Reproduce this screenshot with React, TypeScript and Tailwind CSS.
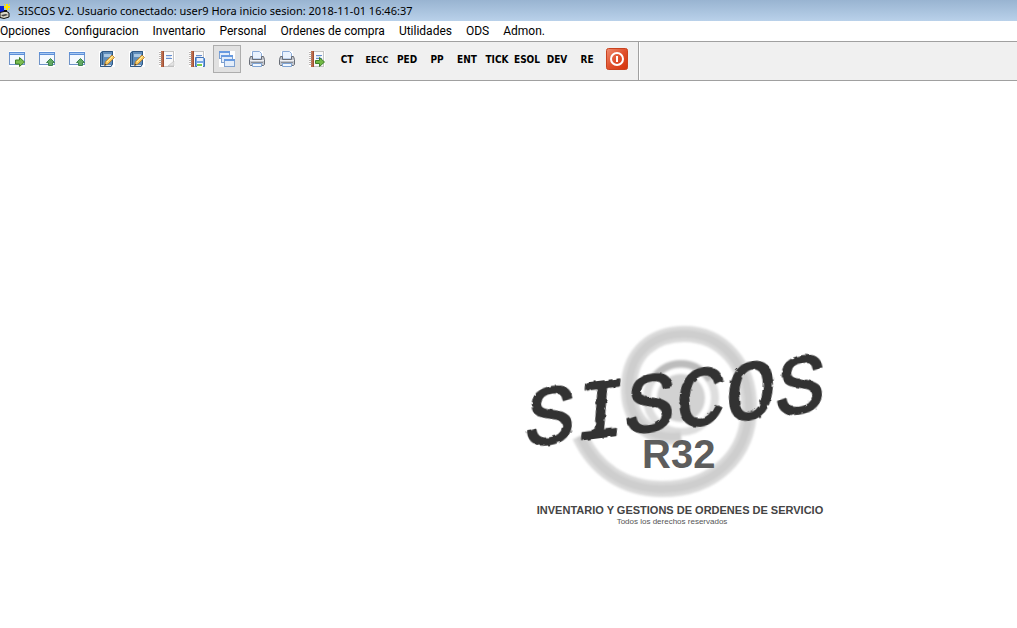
import React from "react";

function AppIcon() {
  return (
    <svg className="h-4 w-3 shrink-0" viewBox="0 0 12 16" aria-hidden="true">
      <path d="M0 3h4v6H0z" fill="#0a22d8" />
      <path d="M6 1h2v2h2v2H8v2H6V5H4V3h2z" fill="#ffe600" />
      <path d="M4 1h1v1H4zM9 1h1v1H9zM9 6h1v1H9z" fill="#ffe600" />
      <path d="M0 9.500l6-1.500 3 2v4l-5 1.500-4-1z" fill="#d9d6c8" stroke="#111" />
      <path d="M1 12l5-1 2 1-5 1.500z" fill="#444" />
      <path d="M4 7h3v2H4z" fill="#111" />
    </svg>
  );
}

function WindowFrame() {
  return (
    <>
      <rect x="0" y="0" width="16" height="16" fill="#fff" />
      <rect x=".5" y="1.5" width="15" height="12" fill="#f4f9ff" stroke="#6f93c8" />
      <rect x="0" y="1" width="16" height="3" fill="#5c8fd8" />
      <rect x="1" y="2" width="14" height="1" fill="#a9c9f2" />
    </>
  );
}

function WindowNext() {
  return (
    <svg className="size-4" viewBox="0 0 16 16" aria-hidden="true">
      <WindowFrame />
      <path d="M6.500 9h4V6.500l5 4.500-5 4.500V13h-4z" fill="#7cbd50" stroke="#3d7f26" />
    </svg>
  );
}

function WindowUp() {
  return (
    <svg className="size-4" viewBox="0 0 16 16" aria-hidden="true">
      <WindowFrame />
      <path d="M11.500 7.500l4 4h-2v3h-4v-3h-2z" fill="#63ab62" stroke="#3d8250" />
    </svg>
  );
}

function BookEdit() {
  return (
    <svg className="size-4" viewBox="0 0 16 16" aria-hidden="true">
      <rect width="16" height="16" fill="#fff" />
      <path d="M1 2l2-2h11v13l-2 3H1z" fill="#5f8dbb" />
      <path d="M1.500 2.500l2-2h10v12.500l-1.500 2.500H1.500z" fill="none" stroke="#2d5683" />
      <path d="M3.500 1v13" stroke="#315b88" />
      <path d="M5 3h7v3H5z" fill="#a9c7e3" />
      <path d="M2 14.500h10" stroke="#dce8f4" />
      <path d="M5.500 14.500l1-4L13 4l2.500 2.500-6.500 6.500z" fill="#f9c85c" stroke="#a87529" strokeWidth=".8" />
      <path d="M8 11l6-6" stroke="#fff0a8" />
      <path d="M5.500 14.500l.5-2 1.500 1.500z" fill="#333" />
    </svg>
  );
}

function NotebookBase() {
  return (
    <>
      <rect x="0" y="0" width="16" height="16" fill="#fff" />
      <rect x="3.500" y=".5" width="11" height="15" fill="#fafafa" stroke="#c4c4c4" />
      <rect x="2" y="0" width="3" height="16" fill="#bd6a48" />
      <path d="M0 1.500h3M0 3.500h3M0 5.500h3M0 7.500h3M0 9.500h3M0 11.500h3M0 13.500h3" stroke="#9b9490" strokeWidth=".7" />
      <path d="M4.500 0v16" stroke="#9d4d34" />
      <path d="M7 4.500h6M7 7.500h6" stroke="#668fd0" />
      <path d="M7 6h5" stroke="#b5caea" />
    </>
  );
}

function Notebook() {
  return (
    <svg className="size-4" viewBox="0 0 16 16" aria-hidden="true">
      <NotebookBase />
      <path d="M9 15l6-5v5z" fill="#e4e4e4" stroke="#bbb" strokeWidth=".6" />
    </svg>
  );
}

function NotebookSave() {
  return (
    <svg className="size-4" viewBox="0 0 16 16" aria-hidden="true">
      <NotebookBase />
      <path d="M6.500 6.500h8l1 1v8h-9z" fill="#78a8e6" stroke="#3f72b8" />
      <rect x="8" y="7" width="6" height="3" fill="#e8f1fc" />
      <rect x="8" y="12" width="6" height="4" fill="#fff" />
      <rect x="8" y="13" width="5" height="2" fill="#79cd4b" />
    </svg>
  );
}

function NotebookNext() {
  return (
    <svg className="size-4" viewBox="0 0 16 16" aria-hidden="true">
      <NotebookBase />
      <path d="M6.500 9.500h4v-3l5 4.500-5 4.500v-3h-4z" fill="#72b944" stroke="#3d7f26" />
    </svg>
  );
}

function Cascade() {
  return (
    <svg className="size-4" viewBox="0 0 16 16" aria-hidden="true">
      <rect width="16" height="16" fill="#fff" />
      <g fill="#e3edfa" stroke="#7da0d0">
        <rect x=".5" y=".5" width="10" height="7" />
        <rect x="2.500" y="4.500" width="11" height="7" />
        <rect x="5.500" y="8.500" width="10" height="7" />
      </g>
      <path d="M0 1h11M2 5h12M5 9h11" stroke="#679ae0" strokeWidth="2" />
    </svg>
  );
}

function Printer() {
  return (
    <svg className="size-4" viewBox="0 0 16 16" aria-hidden="true">
      <rect x="2" y="0" width="12" height="16" fill="#fff" />
      <path d="M3.500 8V.5h7l2 2V8z" fill="#eaf3ff" stroke="#8babd8" />
      <path d="M1.500 5.500h2v3h9v-3h2l1 3v5l-1 1h-13l-1-1v-5z" fill="#c3c7ce" stroke="#686d76" />
      <path d="M1 9.500h14" stroke="#f1f2f5" />
      <path d="M2 11.500h12" stroke="#8a8f98" />
      <path d="M3.500 12.500h9v3h-9z" fill="#f0f7ff" stroke="#7fa4d4" />
    </svg>
  );
}

function Power() {
  return (
    <svg className="size-[22px]" viewBox="0 0 22 22" aria-hidden="true">
      <defs>
        <linearGradient id="power-fill" x1="0" y1="0" x2="1" y2="1">
          <stop offset="0" stopColor="#ef8d71" />
          <stop offset=".5" stopColor="#e0512d" />
          <stop offset="1" stopColor="#d63208" />
        </linearGradient>
      </defs>
      <rect x=".5" y=".5" width="21" height="21" rx="2" fill="url(#power-fill)" stroke="#c9431f" />
      <circle cx="11" cy="11" r="6" fill="none" stroke="#fff" strokeWidth="2" />
      <path d="M11 8v6" stroke="#fff" strokeWidth="2" />
    </svg>
  );
}

type Tool = { label: string; icon?: () => React.JSX.Element; small?: boolean; active?: boolean };

const tools: Tool[] = [
  { label: "Abrir", icon: WindowNext },
  { label: "Subir", icon: WindowUp },
  { label: "Subir todo", icon: WindowUp },
  { label: "Editar", icon: BookEdit },
  { label: "Editar registro", icon: BookEdit },
  { label: "Libreta", icon: Notebook },
  { label: "Guardar", icon: NotebookSave },
  { label: "Cascada", icon: Cascade, active: true },
  { label: "Imprimir", icon: Printer },
  { label: "Imprimir reporte", icon: Printer },
  { label: "Exportar", icon: NotebookNext },
  { label: "CT" },
  { label: "EECC", small: true },
  { label: "PED" },
  { label: "PP" },
  { label: "ENT" },
  { label: "TICK" },
  { label: "ESOL" },
  { label: "DEV" },
  { label: "RE" },
  { label: "Salir", icon: Power },
];

const menus = ["Opciones", "Configuracion", "Inventario", "Personal", "Ordenes de compra", "Utilidades", "ODS", "Admon."];

function ToolButton({ label, icon: Icon, small, active }: Tool) {
  return (
    <button
      type="button"
      aria-label={label}
      aria-pressed={active}
      className={`flex size-7 shrink-0 items-center justify-center leading-4 font-bold whitespace-nowrap ${
        small ? "text-[9px]" : "text-[10px]"
      } ${Icon ? "" : "pt-0.5"} ${active ? "border border-[#adadad] bg-[#e1e1e1]" : ""}`}
    >
      {Icon ? <Icon /> : label}
    </button>
  );
}

const spiral =
  "M161 121C125 126 108 101 109 71C110 38 133 19 164 19C203 19 229 51 229 92C229 141 193 174 142 174C104 174 75 154 60 121";

function Logo() {
  return (
    <svg className="h-[210px] w-[360px]" viewBox="-20 -20 360 210" role="img" aria-label="SISCOS R32">
      <defs>
        <filter id="soft" x="-10%" y="-10%" width="120%" height="120%">
          <feGaussianBlur stdDeviation="1" />
        </filter>
        <filter id="brush" x="-5%" y="-20%" width="110%" height="140%">
          <feTurbulence type="fractalNoise" baseFrequency=".15" numOctaves="2" seed="4" />
          <feDisplacementMap in="SourceGraphic" scale="3" />
        </filter>
      </defs>
      <g filter="url(#soft)" fill="none">
        <circle cx="161" cy="83" r="24" fill="#d2d2d2" />
        <circle cx="161" cy="83" r="34" stroke="#dedede" strokeWidth="8" />
        <path d={spiral} stroke="#dadada" strokeWidth="16" />
        <path d={spiral} stroke="#cecece" strokeWidth="8" />
        <path d="M132 65A34 34 0 0 1 190 65" stroke="#bcbcbc" strokeWidth="7" />
      </g>
      <text
        x="8"
        y="131"
        transform="rotate(-7 8 131)"
        filter="url(#brush)"
        strokeLinejoin="round"
        className="fill-[#333] stroke-[#333] stroke-2 font-['Liberation_Mono',monospace] text-[84px] italic"
      >
        SISCOS
      </text>
      <text x="122" y="153" className="fill-[#5d5d5d] font-['Liberation_Sans',sans-serif] text-[40px] font-bold">
        R32
      </text>
    </svg>
  );
}

export default function App() {
  return (
    <div className="flex min-h-screen flex-col bg-white font-[Roboto,sans-serif] text-xs text-black">
      <header className="flex h-[21px] items-center gap-1.5 overflow-hidden bg-linear-to-b from-[#99b4d1] to-[#b9d1ea]">
        <AppIcon />
        <h1 className="font-['Noto_Sans',sans-serif] text-[11px] leading-4 whitespace-nowrap">
          SISCOS V2. Usuario conectado: user9 Hora inicio sesion: 2018-11-01 16:46:37
        </h1>
      </header>
      <nav className="flex h-5 items-center gap-3.5" aria-label="Menu">
        {menus.map((m) => (
          <button key={m} type="button" className="whitespace-nowrap">
            {m}
          </button>
        ))}
      </nav>
      <div className="flex h-10 border-y border-[#a0a0a0] bg-[#f0f0f0]">
        <div
          role="toolbar"
          aria-label="Herramientas"
          className="flex items-start gap-0.5 border-r border-[#a0a0a0] py-[3px] pr-[7px] pl-[3px] font-['DejaVu_Sans_Condensed','DejaVu_Sans',sans-serif]"
        >
          {tools.map((t) => (
            <ToolButton key={t.label} {...t} />
          ))}
        </div>
        <div className="border-l border-white" />
      </div>
      <main className="flex flex-1 flex-col items-center pt-[214px] pl-[343px]">
        <Logo />
        <p className="font-['Liberation_Sans',sans-serif] text-[11px] leading-[11px] font-bold text-[#444]">
          INVENTARIO Y GESTIONS DE ORDENES DE SERVICIO
        </p>
        <p className="pr-4 font-['Liberation_Sans',sans-serif] text-[8px] leading-[11px] text-[#555]">Todos los derechos reservados</p>
      </main>
    </div>
  );
}
